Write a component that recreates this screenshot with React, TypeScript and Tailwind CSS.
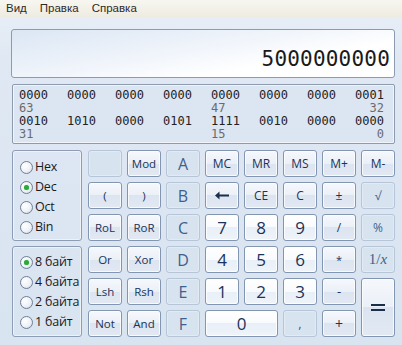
import React from 'react';

type Kind = 'op' | 'digit' | 'off';

interface Key {
  label: React.ReactNode;
  kind: Kind;
  size?: string;
  span?: string;
}

const Arrow = () => (
  <svg width="16" height="9" viewBox="0 0 16 9">
    <path d="M1 4.5 L5.5 0.5 L5.5 3.5 L15 3.5 L15 5.5 L5.5 5.5 L5.5 8.5 Z" fill="#1b2f4d" />
  </svg>
);

const keys: Key[] = [
  { label: '', kind: 'off' },
  { label: 'Mod', kind: 'op' },
  { label: 'A', kind: 'off', size: 'text-[16px]' },
  { label: 'MC', kind: 'op', size: 'text-[12px]' },
  { label: 'MR', kind: 'op', size: 'text-[12px]' },
  { label: 'MS', kind: 'op', size: 'text-[12px]' },
  { label: 'M+', kind: 'op', size: 'text-[12px]' },
  { label: 'M-', kind: 'op', size: 'text-[12px]' },

  { label: '(', kind: 'op' },
  { label: ')', kind: 'op' },
  { label: 'B', kind: 'off', size: 'text-[16px]' },
  { label: <Arrow />, kind: 'op' },
  { label: 'CE', kind: 'op', size: 'text-[12px]' },
  { label: 'C', kind: 'op', size: 'text-[12px]' },
  { label: '±', kind: 'op', size: 'text-[12px]' },
  { label: '√', kind: 'off', size: 'text-[12px]' },

  { label: 'RoL', kind: 'op' },
  { label: 'RoR', kind: 'op' },
  { label: 'C', kind: 'off', size: 'text-[16px]' },
  { label: '7', kind: 'digit', size: 'text-[17px]' },
  { label: '8', kind: 'digit', size: 'text-[17px]' },
  { label: '9', kind: 'digit', size: 'text-[17px]' },
  { label: '/', kind: 'op', size: 'text-[12px]' },
  { label: '%', kind: 'off', size: 'text-[12px]' },

  { label: 'Or', kind: 'op' },
  { label: 'Xor', kind: 'op' },
  { label: 'D', kind: 'off', size: 'text-[16px]' },
  { label: '4', kind: 'digit', size: 'text-[17px]' },
  { label: '5', kind: 'digit', size: 'text-[17px]' },
  { label: '6', kind: 'digit', size: 'text-[17px]' },
  { label: '*', kind: 'op', size: 'text-[11px]' },
  { label: <span className="font-['Liberation_Serif',serif] text-[15px]">1/<i>x</i></span>, kind: 'off' },

  { label: 'Lsh', kind: 'op' },
  { label: 'Rsh', kind: 'op' },
  { label: 'E', kind: 'off', size: 'text-[16px]' },
  { label: '1', kind: 'digit', size: 'text-[17px]' },
  { label: '2', kind: 'digit', size: 'text-[17px]' },
  { label: '3', kind: 'digit', size: 'text-[17px]' },
  { label: '-', kind: 'op', size: 'text-[13px]' },
  { label: <span className="block w-[14px] h-[7px] border-y-[2px] border-[#1b2f4d]" />, kind: 'op', span: 'row-span-2' },

  { label: 'Not', kind: 'op' },
  { label: 'And', kind: 'op' },
  { label: 'F', kind: 'off', size: 'text-[16px]' },
  { label: '0', kind: 'digit', size: 'text-[17px]', span: 'col-span-2' },
  { label: ',', kind: 'off', size: 'text-[13px]' },
  { label: '+', kind: 'op', size: 'text-[14px]' },
];

const kindClass: Record<Kind, string> = {
  op: 'border-[#8396b1] text-[#1b3358] bg-[linear-gradient(to_bottom,#f5f8fc_0%,#ebf0f7_50%,#dbe4f0_50%,#e2e9f3_100%)] shadow-[inset_0_0_0_1px_rgba(255,255,255,0.75)]',
  digit: 'border-[#8396b1] text-[#1b3358] bg-[linear-gradient(to_bottom,#ffffff_0%,#f8fafd_50%,#e9eff7_50%,#eff4fa_100%)] shadow-[inset_0_0_0_1px_rgba(255,255,255,0.9)]',
  off: 'border-[#b6c5d8] text-[#3f5f8c] bg-[#d8e3f0] shadow-[inset_0_0_0_1px_rgba(255,255,255,0.25)]',
};

const bitRows = [
  { bits: ['0000', '0000', '0000', '0000', '0000', '0000', '0000', '0001'], labels: ['63', '47', '32'] },
  { bits: ['0010', '1010', '0000', '0101', '1111', '0010', '0000', '0000'], labels: ['31', '15', '0'] },
];

function Radio({ label, checked }: { label: string; checked?: boolean }) {
  return (
    <div className="flex items-center h-[20px] gap-[2px] whitespace-nowrap">
      <span className="shrink-0 w-[13px] h-[13px] rounded-full border border-[#6f7f98] bg-[radial-gradient(circle_at_35%_35%,#ffffff_0%,#eef2f7_55%,#c9d3e0_100%)] flex items-center justify-center">
        {checked && <span className="w-[5px] h-[5px] rounded-full bg-[#2ea83a] shadow-[0_0_1px_#5fd36a]" />}
      </span>
      <span className="text-[12.5px] tracking-[-0.2px] text-[#1a1a1a] leading-none">{label}</span>
    </div>
  );
}

export default function App() {
  return (
    <div className="w-[402px] h-[345px] overflow-hidden bg-[linear-gradient(to_bottom,#eaf0f8_0px,#dfe8f3_60px,#d9e4f1_345px)] font-['Open_Sans','Noto_Sans',sans-serif] select-none">
      <div className="h-[18px] flex items-center gap-[13px] pl-[6px] bg-[linear-gradient(to_bottom,#f7f6f0,#eeebe0)] font-['Liberation_Sans',sans-serif] text-[11.5px] text-[#2b2b2b]">
        <span>Вид</span>
        <span>Правка</span>
        <span>Справка</span>
      </div>

      <div className="pl-[11px] pr-[7px] pt-[11px] flex flex-col gap-[6px]">
        <div className="h-[49px] rounded-[3px] border border-[#8e9bae] bg-[linear-gradient(170deg,#dbe6f4_0%,#f1f5fb_45%,#ffffff_70%)] flex items-end justify-end pr-[4px] pb-[7px]">
          <span className="font-['DejaVu_Sans_Mono',monospace] text-[21px] leading-none text-[#1a1a1a] tracking-[0.2px]">5000000000</span>
        </div>

        <div className="h-[60px] ml-[1px] rounded-[2px] border border-[#8e9bae] bg-[#dce6f2] shadow-[inset_0_0_0_1px_rgba(255,255,255,0.6)] pl-[6px] pt-[4px] font-['DejaVu_Sans_Mono',monospace] text-[12px] leading-[13px]">
          {bitRows.map((r, i) => (
            <div key={i}>
              <div className="grid grid-cols-[repeat(8,29px)] gap-x-[19px] text-[#222]">
                {r.bits.map((b, j) => <span key={j}>{b}</span>)}
              </div>
              <div className="grid grid-cols-[repeat(8,29px)] gap-x-[19px] text-[#6b6b6b]">
                <span>{r.labels[0]}</span>
                <span className="col-start-5">{r.labels[1]}</span>
                <span className="col-start-8 text-right">{r.labels[2]}</span>
              </div>
            </div>
          ))}
        </div>

        <div className="flex gap-[6px]">
          <div className="w-[72px] ml-[1px] flex flex-col gap-[5px]">
            <div className="h-[91px] rounded-[3px] border border-[#8c9db5] shadow-[inset_0_0_0_1px_rgba(255,255,255,0.5)] pl-[7px] pt-[6px]">
              <Radio label="Hex" />
              <Radio label="Dec" checked />
              <Radio label="Oct" />
              <Radio label="Bin" />
            </div>
            <div className="h-[91px] rounded-[3px] border border-[#8c9db5] shadow-[inset_0_0_0_1px_rgba(255,255,255,0.5)] pl-[7px] pt-[5px]">
              <Radio label="8 байт" checked />
              <Radio label="4 байта" />
              <Radio label="2 байта" />
              <Radio label="1 байт" />
            </div>
          </div>

          <div className="grid grid-cols-[repeat(8,34px)] grid-rows-[repeat(6,27px)] gap-[5px]">
            {keys.map((k, i) => (
              <button
                key={i}
                className={`${k.span ?? ''} ${k.size ?? 'text-[11.5px]'} ${kindClass[k.kind]} rounded-[3px] border flex items-center justify-center leading-none`}
              >
                {k.label}
              </button>
            ))}
          </div>
        </div>
      </div>
    </div>
  );
}
